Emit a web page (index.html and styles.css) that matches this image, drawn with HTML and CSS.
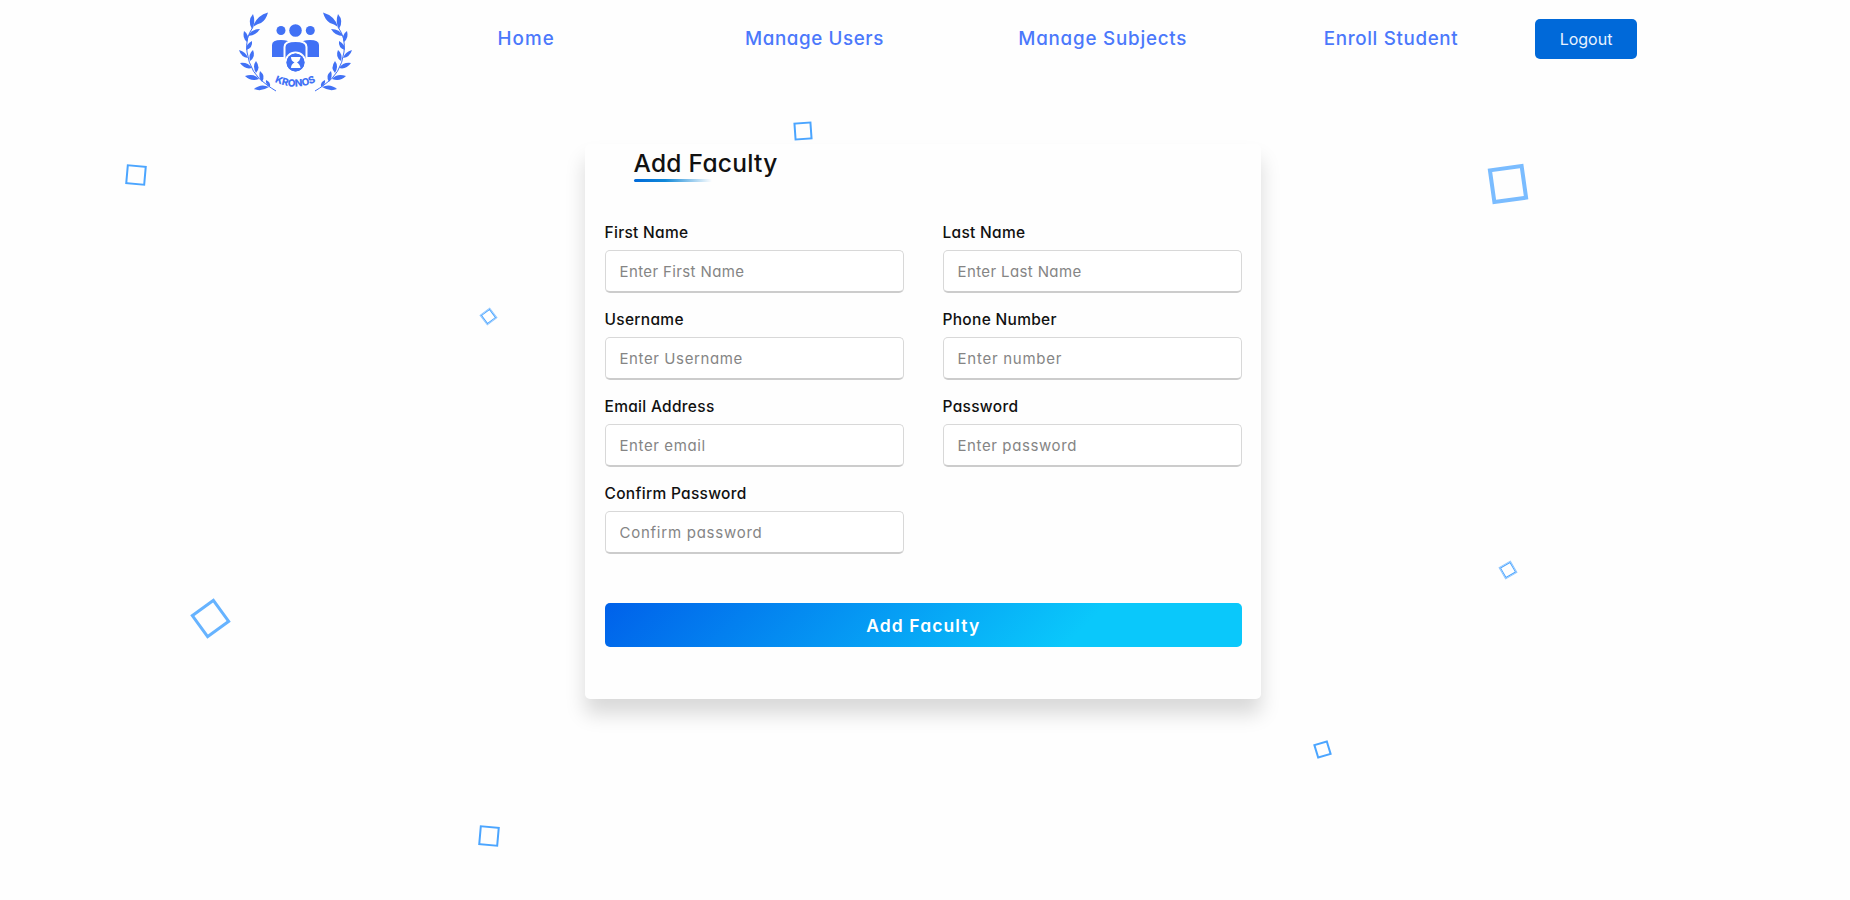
FILE: index.html
```html
<!DOCTYPE html>
<html lang="en">
<head>
<meta charset="utf-8">
<title>Add Faculty</title>
<link rel="stylesheet" href="styles.css">
</head>
<body>
<div class="cubes" aria-hidden="true">
  <span class="cube cube-1"></span>
  <span class="cube cube-2"></span>
  <span class="cube cube-3"></span>
  <span class="cube cube-4"></span>
  <span class="cube cube-5"></span>
  <span class="cube cube-6"></span>
  <span class="cube cube-7"></span>
  <span class="cube cube-8"></span>
</div>
<header class="header">
  <svg class="logo" viewBox="0 0 130 100" role="img" aria-label="Kronos">
    <defs>
      <g id="branch">
        <path d="M23 27Q15 38 17 52Q20 74 37 85Q41 88 46 91" fill="none" stroke="currentColor" stroke-width="1"/>
        <path d="M23 27Q26 16 38 12.500Q36 20 31 23Q27 24 23 27Z"/>
        <path d="M22 29Q17 21 23 14Q26 22 22 29Z"/>
        <path d="M18 36Q21 29 30 29Q26 36 18 36Z"/>
        <path d="M17 42Q12 38 14 31Q20 35 17 42Z"/>
        <path d="M16 50Q16 44 22 41Q23 48 16 50Z"/>
        <path d="M18 58Q11 57 9 50Q16 52 18 58Z"/>
        <path d="M20 61Q18 54 23 50Q26 57 20 61Z"/>
        <path d="M22 68Q15 70 10 63Q18 62 22 68Z"/>
        <path d="M26 73Q22 66 26 61Q31 68 26 73Z"/>
        <path d="M29 79Q21 82 15 76Q24 73 29 79Z"/>
        <path d="M32 82Q28 77 30 71Q36 76 32 82Z"/>
        <path d="M39 87Q31 92 24 89Q31 83 39 87Z"/>
        <path d="M40 87Q35 84 36 80Q41 82 40 87Z"/>
      </g>
      <path id="arc" d="M43.500 81.500Q65.500 92 88 81"/>
    </defs>
    <g fill="currentColor">
      <use href="#branch"/>
      <use href="#branch" transform="translate(131 0) scale(-1 1)"/>
      <circle cx="51" cy="30.500" r="4.500"/>
      <circle cx="65.500" cy="30.500" r="6.300"/>
      <circle cx="80.300" cy="30.500" r="4.500"/>
      <path d="M42 57V45Q42 40 51 40Q59 40 59 43V57Z"/>
      <path d="M89 57V45Q89 40 80 40Q72 40 72 43V57Z"/>
      <path class="cut" d="M54.500 60V47Q54.500 41 65.500 41Q76.500 41 76.500 47V60Z"/>
      <circle class="cut" cx="65.500" cy="62.500" r="10"/>
      <circle cx="65.500" cy="62.500" r="9"/>
    </g>
    <path class="glass" d="M61 57H70.500Q70 61 67 62.500Q70 64 70.500 68H61Q61 64 64.500 62.500Q61 61 61 57Z"/>
    <text class="logo-text"><textPath href="#arc" startOffset="1" textLength="43">KRONOS</textPath></text>
  </svg>
  <nav class="nav">
    <a class="nav-link home">Home</a>
    <a class="nav-link users">Manage Users</a>
    <a class="nav-link subjects">Manage Subjects</a>
    <a class="nav-link enroll">Enroll Student</a>
  </nav>
  <button class="logout">Logout</button>
</header>
<main class="card">
  <h1 class="title">Add Faculty</h1>
  <form class="form">
    <div class="fields">
      <label class="field">First Name<input class="input name" placeholder="Enter First Name"></label>
      <label class="field">Last Name<input class="input name" placeholder="Enter Last Name"></label>
      <label class="field">Username<input class="input" placeholder="Enter Username"></label>
      <label class="field">Phone Number<input class="input wide" placeholder="Enter number"></label>
      <label class="field">Email Address<input class="input" placeholder="Enter email"></label>
      <label class="field">Password<input class="input" placeholder="Enter password"></label>
      <label class="field">Confirm Password<input class="input wide" placeholder="Confirm password"></label>
    </div>
    <button class="submit" type="button">Add Faculty</button>
  </form>
</main>
</body>
</html>
```
FILE: styles.css
```css
* { box-sizing: border-box; margin: 0; padding: 0; }
body {
  height: 900px;
  overflow: hidden;
  background: #fefefe;
  color: #111;
  font-family: Inter, "Open Sans", sans-serif;
  font-feature-settings: "cv11";
}
input, button { font: inherit; font-feature-settings: inherit; border: 0; }
.header { display: flex; align-items: flex-start; height: 100px; padding-left: 230px; }
.logo { width: 130px; height: 100px; margin-right: 22px; color: #4171f5; }
.cut { stroke: #fefefe; stroke-width: 2; }
.glass { fill: #fefefe; }
.logo-text { fill: #4171f5; font-size: 10px; font-weight: 800; }
.nav { display: grid; grid-template-columns: repeat(4, 288.3px); padding-top: 24px; width: 1153px; }
.nav-link { color: #4b78fb; font-size: 18.8px; font-weight: 500; line-height: 30px; text-align: center; }
.home { letter-spacing: 1.1px; }
.users { letter-spacing: .6px; }
.subjects { letter-spacing: .78px; }
.enroll { letter-spacing: .65px; }
.logout {
  width: 102px; height: 40px; margin-top: 19px;
  border-radius: 5px; background: #0069d9; color: #e8f2ff; font-size: 16px;
}
.card {
  position: relative;
  width: 676px; height: 555px; margin: 44px 0 0 585px; padding: 0 19px 0 19.500px;
  border-radius: 5px; background: #fefefe;
  box-shadow: 0 15px 20px rgba(0, 0, 0, .15);
}
.title { position: relative; width: 160px; height: 39px; margin-left: 29px; font-size: 24.5px; font-weight: 500; line-height: 38px; letter-spacing: .27px; white-space: nowrap; }
.title::after {
  content: ""; position: absolute; left: 0; bottom: 1px; width: 78px; height: 3px;
  border-radius: 5px; background: linear-gradient(90deg, #0069d9, #1088d8 40%, transparent);
}
.fields { display: grid; grid-template-columns: 299.500px 299.500px; justify-content: space-between; row-gap: 15px; padding-top: 38px; }
.field { display: flex; flex-direction: column; height: 72px; font-size: 15.5px; font-weight: 500; line-height: 24px; letter-spacing: .3px; }
.input {
  height: 44px; margin-top: 5px; padding: 0 14px;
  border: 1px solid #d8d8d8; border-bottom: 2px solid #ccc; border-radius: 5px;
  background: #fff; font-size: 15px; font-weight: 400; letter-spacing: .6px;
}
.name { letter-spacing: .38px; }
.wide { letter-spacing: .75px; }
.input::placeholder { color: #858585; }
.submit {
  display: block; width: 100%; height: 44px; margin-top: 49px;
  border-radius: 5px; background: linear-gradient(135deg, #0061ea, #0ac8fb 74%);
  color: #fff; font-size: 17.5px; font-weight: 600; letter-spacing: 1.1px;
}
.cube { position: absolute; border: 2px solid #4ba5ff; }
.cube-1 { left: 126px; top: 165px; width: 20px; height: 20px; transform: rotate(5deg); }
.cube-2 { left: 794px; top: 122px; width: 18px; height: 18px; transform: rotate(-4deg); }
.cube-3 { left: 1490px; top: 166px; width: 36px; height: 36px; border: 4px solid #7abcff; transform: rotate(-8deg); }
.cube-4 { left: 483px; top: 311px; width: 11px; height: 11px; border-width: 1.500px; outline: .5px solid #8fc6ff; transform: rotate(-37deg); }
.cube-5 { left: 196px; top: 604px; width: 29px; height: 29px; border: 3px solid #66b3ff; transform: rotate(-36deg); }
.cube-6 { left: 1502px; top: 564px; width: 12px; height: 12px; border-width: 1.500px; outline: .5px solid #8fc6ff; transform: rotate(-30deg); }
.cube-7 { left: 1315px; top: 742px; width: 15px; height: 15px; transform: rotate(-17deg); }
.cube-8 { left: 479px; top: 826px; width: 20px; height: 20px; transform: rotate(5deg); }
```
